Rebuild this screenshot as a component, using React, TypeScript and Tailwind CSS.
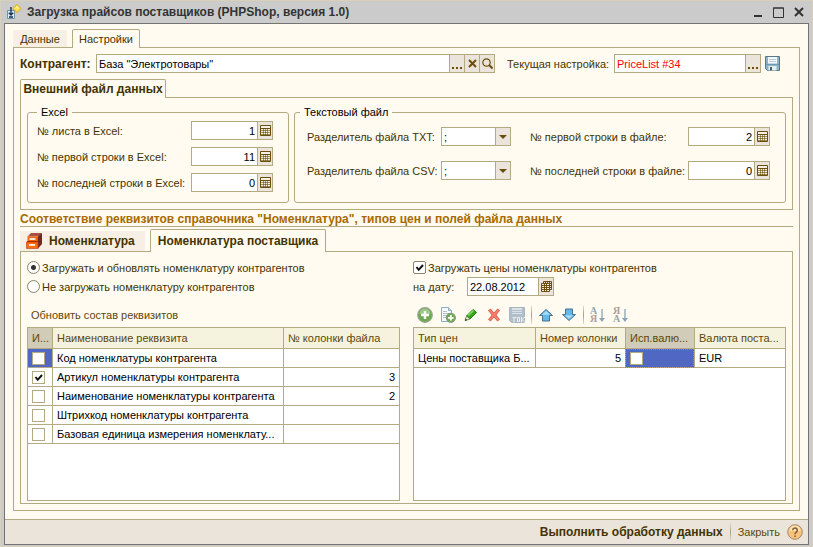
import * as React from "react";

type Attribute = {
  id: number;
  name: string;
  column: string;
  use: boolean;
};

const attributes: Attribute[] = [
  { id: 1, name: "Код номенклатуры контрагента", column: "", use: false },
  { id: 2, name: "Артикул номенклатуры контрагента", column: "3", use: true },
  { id: 3, name: "Наименование номенклатуры контрагента", column: "2", use: false },
  { id: 4, name: "Штрихкод номенклатуры контрагента", column: "", use: false },
  { id: 5, name: "Базовая единица измерения номенклату...", column: "", use: false },
];

/* Icons */

function AppIcon() {
  return (
    <svg className="size-4 shrink-0" viewBox="0 0 16 16">
      <path d="M1.500 6.500h7v8h-7z" fill="#dcebf5" stroke="#6f93ad" />
      <path d="M5 3v8M2.800 8.800 5 11l2.200-2.200M3 13h4" fill="none" stroke="#12304a" strokeWidth="1.300" />
      <path d="m11 .5 4 4-4 4-4-4z" fill="#ffe04a" stroke="#d9a520" />
      <path d="m11 2 2.500 2.500h-5z" fill="#fff3a0" />
    </svg>
  );
}

function CalcIcon() {
  return (
    <svg className="size-[11px]" viewBox="0 0 11 11" fill="none" stroke="#6b4e0a">
      <path d="M.5.5h10v10H.5z" fill="#f6f1e4" />
      <path d="M1 3.500h9" />
      <path d="M1 5.500h9M1 7.500h9M1 9.500h9M3.500 4v6M5.500 4v6M7.500 4v6" strokeOpacity=".6" />
    </svg>
  );
}

function CalendarIcon() {
  return (
    <svg className="size-[11px]" viewBox="0 0 11 11" fill="none" stroke="#6b4e0a">
      <path d="M2.500 2V.5h8v8H9M4.500.5v2M6.500.5v2M8.500.5v2M9 2.500h2M9 4.500h2M9 6.500h2" />
      <path d="M.5 2.500h8v8h-8zM.5 4.500h8M.5 6.500h8M.5 8.500h8M3.500 2.500v8M5.500 2.500v8" fill="#f6f1e4" />
    </svg>
  );
}

function ClearIcon() {
  return (
    <svg className="size-[9px]" viewBox="0 0 9 9" stroke="#6b4e0a" strokeWidth="2">
      <path d="m1 1 7 7M8 1 1 8" />
    </svg>
  );
}

function SearchIcon() {
  return (
    <svg className="size-[11px]" viewBox="0 0 11 11" fill="none" stroke="#6b4e0a">
      <circle cx="4.500" cy="4.500" r="3.700" strokeWidth="1.200" />
      <path d="m7 7 3.500 3.500" strokeWidth="2" />
    </svg>
  );
}

function DotsIcon() {
  return (
    <svg className="mt-[8px] h-[2px] w-[10px]" viewBox="0 0 10 2" fill="#6b4e0a">
      <path d="M0 0h2v2H0zM4 0h2v2H4zM8 0h2v2H8z" />
    </svg>
  );
}

function ArrowIcon() {
  return (
    <svg className="h-[4px] w-[8px]" viewBox="0 0 8 4" fill="#6b4e0a">
      <path d="M0 0h8L4 4z" />
    </svg>
  );
}

function SaveIcon() {
  return (
    <svg className="size-4" viewBox="0 0 16 16">
      <path d="M.5.5h14v14H2.500l-2-2z" fill="#8db3cc" stroke="#54788f" />
      <path d="M3 1h9v6.500H3z" fill="#f4f9fc" />
      <path d="M4 3.500h7M4 5.500h7" stroke="#b9cddb" />
      <path d="M1 8.500h13" stroke="#6f99b5" />
      <path d="M3.500 10h8v4.500h-8z" fill="#e8eee4" />
      <path d="M5 11h2v3.500H5z" fill="#3d607c" />
    </svg>
  );
}

function DrawerIcon() {
  return (
    <svg className="size-4" viewBox="0 0 16 16">
      <path d="M5 0h11l-3 3.500H1.500z" fill="#a8503f" />
      <path d="m12 3.500 4-3.500v11l-4 4.500z" fill="#6b2a22" />
      <path d="M1.500 3.500H12v5H1.500z" fill="#f2610c" />
      <path d="M.5 9h11.500v6.500H.5z" fill="#ff6a10" stroke="#b83a08" strokeWidth=".6" />
      <path d="M3.500 5h6v2h-6zM3 11h6v2H3z" fill="#ffe7cf" />
      <path d="M1 8.500h11" stroke="#a82c08" />
    </svg>
  );
}

function AddIcon() {
  return (
    <svg className="size-4" viewBox="0 0 16 16">
      <circle cx="8" cy="8" r="7.300" fill="#6faa53" stroke="#98a393" strokeWidth="1.200" />
      <path d="M2.500 7a5.500 5.500 0 0 1 11 0z" fill="#9cca84" />
      <path d="M8 4v8M4 8h8" stroke="#fff" strokeWidth="2.400" />
    </svg>
  );
}

function CopyIcon() {
  return (
    <svg className="size-4" viewBox="0 0 16 16">
      <path d="M1.500.5h7l3 3v11h-10z" fill="#fafdff" stroke="#8fabc2" />
      <path d="M8.500.5v3h3" fill="#cfdfeb" stroke="#8fabc2" />
      <path d="M3 4.500h4M3 6.500h7M3 8.500h5M3 10.500h3" stroke="#a9c0d2" />
      <circle cx="10.800" cy="10.800" r="4.600" fill="#6faa53" stroke="#7f957a" />
      <path d="M10.800 8v5.600M8 10.800h5.600" stroke="#fff" strokeWidth="1.800" />
    </svg>
  );
}

function EditIcon() {
  return (
    <svg className="size-4" viewBox="0 0 16 16">
      <path d="M3.500 9 10 2.500l3.500 3L7 12z" fill="#35a81a" stroke="#23780f" strokeLinejoin="round" />
      <path d="m5 8.500 5.500-5" stroke="#8fdc68" strokeWidth="1.500" />
      <path d="M3.500 9 2 13.500 7 12z" fill="#f3eeda" stroke="#4b7a39" strokeWidth=".8" />
      <path d="m2 13.800.7-2.300 1.600 1.700z" fill="#1f3815" />
    </svg>
  );
}

function DeleteIcon() {
  return (
    <svg className="size-4" viewBox="0 0 16 16">
      <path d="m2.500 3.500 2-1.500L8 6l3.500-4 2 1.500L10 8l3.500 4.500-2 1.500L8 10l-3.500 4-2-1.500L6 8z" fill="#f47c6a" stroke="#d9503f" strokeWidth=".8" />
    </svg>
  );
}

function FinishIcon() {
  return (
    <svg className="size-4" viewBox="0 0 16 16">
      <path d="M.5.5h15v15H2.500l-2-2z" fill="#b1bfca" stroke="#a7b5c0" />
      <path d="M3 1h10v6H3z" fill="#dbe1e5" />
      <path d="M3 3.500h10M3 5.500h10" stroke="#b5c1ca" />
      <path d="M3.500 10.500h4M5 10.500v5M8.500 10.500h2v4h-2zM12.500 10v5.500M16 10l-3 2.500 3 3" fill="none" stroke="#eceff1" />
    </svg>
  );
}

function MoveIcon({ down }: { down?: boolean }) {
  return (
    <svg className={down ? "size-4 rotate-180" : "size-4"} viewBox="0 0 16 16">
      <path d="m8 2.500 6.500 6h-3V14h-7V8.500h-3z" fill="#62b8e8" stroke="#4a6f8c" strokeLinejoin="round" />
      <path d="m8 4 4 3.800H4z" fill="#a9dcf6" />
    </svg>
  );
}

function SortIcon({ desc }: { desc?: boolean }) {
  return (
    <svg className="size-4 overflow-visible" viewBox="0 0 16 16" fontFamily="Liberation Serif, serif" fontSize="10" fontWeight="bold">
      <text x="0" y="7" fill={desc ? "#b59a97" : "#93a4b0"}>{desc ? "Я" : "А"}</text>
      <text x="0" y="15" fill={desc ? "#93a4b0" : "#b59a97"}>{desc ? "А" : "Я"}</text>
      <path d="M12 2v11" stroke="#8ca3b3" strokeWidth="1.300" />
      <path d="M9 11h6l-3 4z" fill="#8ca3b3" />
    </svg>
  );
}

function HelpIcon() {
  return (
    <svg className="size-4" viewBox="0 0 16 16">
      <circle cx="8" cy="8" r="7.300" fill="#f7c27c" stroke="#a58b6c" />
      <path d="M2.500 7a5.500 5.500 0 0 1 11 0z" fill="#fce0b4" />
      <path d="M5.700 6.300a2.300 2.300 0 1 1 3.600 1.900C8.300 8.900 8 9.200 8 10.200M8 11.500v1.500" fill="none" stroke="#805c35" strokeWidth="1.500" />
    </svg>
  );
}

/* Form parts */

function FieldButton({ label, children }: { label: string; children: React.ReactNode }) {
  return (
    <button
      type="button"
      aria-label={label}
      className="flex w-[15px] shrink-0 items-center justify-center border-l border-[#b3aa82] bg-[#ebe4da]"
    >
      {children}
    </button>
  );
}

function Field({
  id,
  value,
  className = "",
  inputClass = "",
  children,
}: {
  id: string;
  value: string;
  className?: string;
  inputClass?: string;
  children: React.ReactNode;
}) {
  return (
    <div className={`flex h-[19px] border border-[#b3aa82] bg-white ${className}`}>
      <input
        id={id}
        type="text"
        defaultValue={value}
        className={`w-full min-w-0 flex-1 px-[2px] outline-none ${inputClass || "text-black"}`}
      />
      {children}
    </div>
  );
}

function NumberField({ id, label, value }: { id: string; label: string; value: string }) {
  return (
    <>
      <label htmlFor={id} className="whitespace-nowrap">{label}</label>
      <Field id={id} value={value} inputClass="text-right text-black">
        <FieldButton label="Калькулятор">
          <CalcIcon />
        </FieldButton>
      </Field>
    </>
  );
}

function SeparatorField({ id, label }: { id: string; label: string }) {
  return (
    <>
      <label htmlFor={id} className="whitespace-nowrap">{label}</label>
      <div className="relative h-[19px]">
        <select id={id} className="size-full appearance-none border border-[#b3aa82] bg-white px-[2px] text-black outline-none">
          <option>;</option>
          <option>,</option>
        </select>
        <span className="pointer-events-none absolute inset-y-px right-px flex w-[15px] items-center justify-center border-l border-[#b3aa82] bg-[#ebe4da]">
          <ArrowIcon />
        </span>
      </div>
    </>
  );
}

function Check({ id, label, checked, round }: { id?: string; label?: string; checked?: boolean; round?: boolean }) {
  return (
    <span className="relative block size-[13px] shrink-0">
      <input
        id={id}
        type="checkbox"
        aria-label={label}
        defaultChecked={checked}
        className={`peer block size-full appearance-none border bg-white ${round ? "rounded-[2px] border-[#8a8468]" : "border-[#b3aa82]"}`}
      />
      <svg className="pointer-events-none absolute inset-0 hidden size-full peer-checked:block" viewBox="0 0 13 13">
        <path d="m3.500 6 2.200 2.800L10 4" fill="none" stroke="#111" strokeWidth="2" />
      </svg>
    </span>
  );
}

function Radio({ id, checked, children }: { id: string; checked?: boolean; children: React.ReactNode }) {
  return (
    <div className="flex h-[19px] items-center gap-[2px]">
      <input
        id={id}
        type="radio"
        name="mode"
        defaultChecked={checked}
        className="size-[13px] shrink-0 appearance-none rounded-full border border-[#8a8468] bg-white bg-center bg-no-repeat checked:bg-[radial-gradient(circle,#333_2px,transparent_3px)]"
      />
      <label htmlFor={id} className="whitespace-nowrap">{children}</label>
    </div>
  );
}

function Tool({ label, children }: { label: string; children: React.ReactNode }) {
  return (
    <button type="button" aria-label={label} className="size-4 shrink-0">
      {children}
    </button>
  );
}

function Divider() {
  return <span className="h-[18px] w-px shrink-0 bg-linear-to-b from-[#e3dcc4] via-[#a79f7c] to-[#e3dcc4]" />;
}

const th = "h-[21px] overflow-hidden whitespace-nowrap border-b border-l border-[#b3aa82] pl-1 text-left font-normal first:border-l-0";
const td = "h-[19px] overflow-hidden whitespace-nowrap border-b border-l border-[#b3aa82] pl-1 text-black first:border-l-0";

export default function App() {
  return (
    <div className="flex min-h-screen flex-col border border-[#d8d0b8] bg-[#cbcbcb] px-[3px] pb-px text-[11px] leading-[14px] text-[#443300] [font-family:'Liberation_Sans',Arial,sans-serif]">
      <header className="flex h-[22px] items-center gap-[5px] pr-[5px] pl-[2px]">
        <AppIcon />
        <h1 className="flex-1 truncate text-[12px] font-bold text-[#333]">
          Загрузка прайсов поставщиков (PHPShop, версия 1.0)
        </h1>
        <div className="flex items-center gap-[10px] text-[#333]">
          <button type="button" aria-label="Свернуть">
            <svg className="size-[10px]" viewBox="0 0 10 10"><path d="M1 8h8v2H1z" fill="currentColor" /></svg>
          </button>
          <button type="button" aria-label="Развернуть">
            <svg className="size-[11px]" viewBox="0 0 11 11"><path d="M.5 1h10v9.500H.5zM0 1h11" fill="none" stroke="currentColor" /></svg>
          </button>
          <button type="button" aria-label="Закрыть окно">
            <svg className="size-[10px]" viewBox="0 0 10 10"><path d="m1 1 8 8M9 1 1 9" stroke="currentColor" strokeWidth="2" /></svg>
          </button>
        </div>
      </header>

      <div className="flex flex-1 flex-col border border-[#737373] bg-[#fffbf0]">
        <main className="flex flex-1 flex-col px-2 pt-[5px] pb-2">
          <nav className="relative z-10 -mb-px flex items-end gap-[5px]">
            <button type="button" className="mb-px h-[17px] w-[54px] bg-[#f7efe3]">Данные</button>
            <button type="button" className="h-[19px] w-[68px] rounded-t-[2px] border border-b-0 border-[#b3aa82] bg-[#fffbf0]">Настройки</button>
          </nav>

          <div className="flex flex-1 flex-col border border-[#b3aa82] p-[6px]">
            {/* Контрагент и настройка */}
            <div className="mb-[6px] flex items-center">
              <label htmlFor="partner" className="w-[76px] shrink-0 text-[12px] font-bold">Контрагент:</label>
              <Field id="partner" value='База "Электротовары"' className="flex-1">
                <FieldButton label="Выбрать"><DotsIcon /></FieldButton>
                <FieldButton label="Очистить"><ClearIcon /></FieldButton>
                <FieldButton label="Открыть"><SearchIcon /></FieldButton>
              </Field>
              <label htmlFor="preset" className="ml-3 w-[107px] shrink-0 whitespace-nowrap">Текущая настройка:</label>
              <Field id="preset" value="PriceList #34" className="w-[147px]" inputClass="text-[#ff0000]">
                <FieldButton label="Выбрать настройку"><DotsIcon /></FieldButton>
              </Field>
              <button type="button" aria-label="Сохранить настройку" className="mr-[12px] ml-1"><SaveIcon /></button>
            </div>

            {/* Внешний файл */}
            <nav className="relative z-10 -mb-px flex">
              <button type="button" className="h-[19px] w-[146px] rounded-t-[2px] border border-b-0 border-[#b3aa82] bg-[#fffbf0] text-[12px] font-bold whitespace-nowrap">
                Внешний файл данных
              </button>
            </nav>
            <div className="flex gap-[5px] border border-[#b3aa82] px-[6px] pt-[7px] pb-[6px]">
              <fieldset className="w-[262px] shrink-0 rounded-[3px] border border-[#b3aa82] pr-[15px] pb-[10px] pl-[9px]">
                <legend className="px-1 text-black">Excel</legend>
                <div className="grid grid-cols-[1fr_82px] items-center gap-y-[7px] pt-[2px]">
                  <NumberField id="sheet" label="№ листа в Excel:" value="1" />
                  <NumberField id="first-xls" label="№ первой строки в Excel:" value="11" />
                  <NumberField id="last-xls" label="№ последней строки в Excel:" value="0" />
                </div>
              </fieldset>
              <fieldset className="min-w-0 flex-1 rounded-[3px] border border-[#b3aa82] pr-[15px] pl-3">
                <legend className="-ml-[7px] px-1 text-black">Текстовый файл</legend>
                <div className="grid grid-cols-[134px_70px_1fr_82px] items-center gap-y-[15px] pt-2 [&>label:nth-of-type(even)]:pl-[19px]">
                  <SeparatorField id="sep-txt" label="Разделитель файла TXT:" />
                  <NumberField id="first-txt" label="№ первой строки в файле:" value="2" />
                  <SeparatorField id="sep-csv" label="Разделитель файла CSV:" />
                  <NumberField id="last-txt" label="№ последней строки в файле:" value="0" />
                </div>
              </fieldset>
            </div>

            <h2 className="h-[17px] truncate border-b border-[#b3aa82] pt-[2px] text-[12px] font-bold text-[#a66a00]">
              Соответствие реквизитов справочника "Номенклатура", типов цен и полей файла данных
            </h2>

            {/* Номенклатура */}
            <nav className="relative z-10 mt-[2px] -mb-px flex items-end gap-[5px] text-[12px] font-bold whitespace-nowrap">
              <button type="button" className="mb-px flex h-5 w-[125px] items-center gap-[7px] bg-[#f7efe3] pl-[6px]">
                <DrawerIcon />
                Номенклатура
              </button>
              <button type="button" className="h-[23px] w-[176px] rounded-t-[2px] border border-b-0 border-[#b3aa82] bg-[#fffbf0]">
                Номенклатура поставщика
              </button>
            </nav>
            <div className="grid flex-1 grid-cols-2 gap-[13px] border border-[#b3aa82] px-[6px] pt-[6px] pb-[2px]">
              <section className="flex min-w-0 flex-col">
                <Radio id="load" checked>Загружать и обновлять номенклатуру контрагентов</Radio>
                <Radio id="skip">Не загружать номенклатуру контрагентов</Radio>
                <div className="flex h-[31px] items-center pt-[6px] pl-1">
                  <button type="button" className="text-[#5e4708]">Обновить состав реквизитов</button>
                </div>
                <div className="flex-1 border border-[#b3aa82] bg-white">
                  <table className="w-full table-fixed border-separate border-spacing-0">
                    <thead className="bg-[#f5f2dd] text-[#5e4708]">
                      <tr>
                        <th className={`${th} w-[24px] bg-[#d0ccb8]`}>И...</th>
                        <th className={`${th} w-[231px]`}>Наименование реквизита</th>
                        <th className={th}>№ колонки файла</th>
                      </tr>
                    </thead>
                    <tbody>
                      {attributes.map((a) => (
                        <tr key={a.id}>
                          <td className={`${td} ${a.id === 1 ? "bg-[#5068c4]" : ""}`}>
                            <Check label={a.name} checked={a.use} />
                          </td>
                          <td className={td}>{a.name}</td>
                          <td className={`${td} pr-1 text-right`}>{a.column}</td>
                        </tr>
                      ))}
                    </tbody>
                  </table>
                </div>
              </section>

              <section className="flex min-w-0 flex-col">
                <div className="flex h-[19px] items-center gap-[2px]">
                  <Check id="prices" checked round />
                  <label htmlFor="prices" className="whitespace-nowrap">Загружать цены номенклатуры контрагентов</label>
                </div>
                <div className="flex items-center">
                  <label htmlFor="date" className="w-[54px]">на дату:</label>
                  <Field id="date" value="22.08.2012" className="w-[87px]">
                    <FieldButton label="Календарь"><CalendarIcon /></FieldButton>
                  </Field>
                </div>
                <div className="flex h-[31px] items-center gap-[6px] pt-[6px] pl-1">
                  <div className="flex gap-[7px]">
                    <Tool label="Добавить"><AddIcon /></Tool>
                    <Tool label="Скопировать"><CopyIcon /></Tool>
                    <Tool label="Изменить"><EditIcon /></Tool>
                    <Tool label="Удалить"><DeleteIcon /></Tool>
                    <Tool label="Закончить"><FinishIcon /></Tool>
                  </div>
                  <Divider />
                  <div className="flex gap-[7px]">
                    <Tool label="Вверх"><MoveIcon /></Tool>
                    <Tool label="Вниз"><MoveIcon down /></Tool>
                  </div>
                  <Divider />
                  <div className="flex gap-[7px]">
                    <Tool label="По возрастанию"><SortIcon /></Tool>
                    <Tool label="По убыванию"><SortIcon desc /></Tool>
                  </div>
                </div>
                <div className="flex-1 border border-[#b3aa82] bg-white">
                  <table className="w-full table-fixed border-separate border-spacing-0">
                    <thead className="bg-[#f5f2dd] text-[#5e4708]">
                      <tr>
                        <th className={`${th} w-[121px]`}>Тип цен</th>
                        <th className={`${th} w-[90px]`}>Номер колонки</th>
                        <th className={`${th} w-[69px] bg-[#d0ccb8]`}>Исп.валю...</th>
                        <th className={th}>Валюта поста...</th>
                      </tr>
                    </thead>
                    <tbody>
                      <tr>
                        <td className={td}>Цены поставщика Б...</td>
                        <td className={`${td} pr-1 text-right`}>5</td>
                        <td className={`${td} bg-[#5068c4] outline-1 -outline-offset-1 outline-dotted outline-[#b08a30]`}>
                          <Check label="Исп.валюту" />
                        </td>
                        <td className={td}>EUR</td>
                      </tr>
                    </tbody>
                  </table>
                </div>
              </section>
            </div>
          </div>
        </main>

        <footer className="flex h-[25px] items-center justify-end gap-[7px] border-t border-[#b3aa82] bg-[#ebe4da] pr-[5px]">
          <button type="button" className="text-[12px] font-bold">Выполнить обработку данных</button>
          <Divider />
          <button type="button" className="text-[#5e4708]">Закрыть</button>
          <button type="button" aria-label="Справка"><HelpIcon /></button>
        </footer>
      </div>
    </div>
  );
}
